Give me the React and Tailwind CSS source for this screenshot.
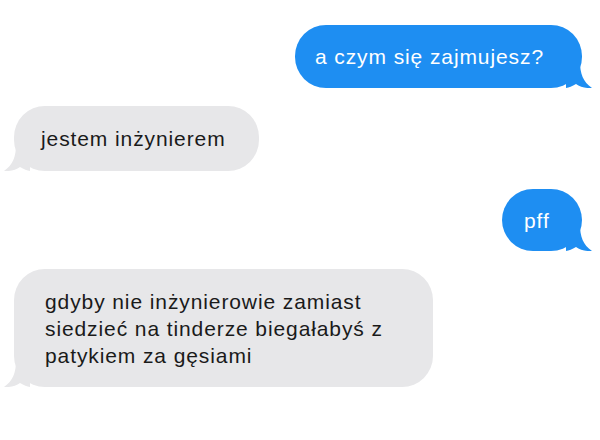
import React from 'react';

const messages = [
  { from: 'me', text: 'a czym się zajmujesz?', box: 'w-[287px] h-[63px] pl-[20px]' },
  { from: 'them', text: 'jestem inżynierem', box: 'w-[245px] h-[65px] pl-[27px]' },
  { from: 'me', text: 'pff', box: 'w-[80px] h-[62px] pl-[22px]' },
  {
    from: 'them',
    text: 'gdyby nie inżynierowie zamiast\nsiedzieć na tinderze biegałabyś z\npatykiem za gęsiami',
    box: 'w-[419px] h-[118px] pl-[31px]',
  },
];

function Tail({ side, color }) {
  // small curled tail at the bottom corner of a bubble
  if (side === 'right') {
    return (
      <svg className="absolute -right-[10px] bottom-0" width="26" height="26" viewBox="0 0 26 26">
        <path d="M0 0 L14 0 C14 11 17 20 26 26 C20 26.5 14 25 10 22 C6 24.5 3 25.5 0 26 Z" fill={color} />
      </svg>
    );
  }
  return (
    <svg className="absolute -left-[10px] bottom-0" width="26" height="26" viewBox="0 0 26 26">
      <path d="M26 0 L12 0 C12 11 9 20 0 26 C6 26.5 12 25 16 22 C20 24.5 23 25.5 26 26 Z" fill={color} />
    </svg>
  );
}

function Bubble({ from, text, box }) {
  const mine = from === 'me';
  const lines = text.split('\n');
  return (
    <div className={mine ? 'flex justify-end pr-[18px]' : 'flex justify-start'}>
      <div
        className={
          (mine
            ? 'relative bg-[#1e8ef2] text-white rounded-[31px] '
            : 'relative bg-[#e7e7e9] text-[#1a1a1a] rounded-[31px] ') +
          'flex flex-col justify-center shrink-0 text-[21px] leading-[27px] tracking-[0.9px] ' +
          box
        }
      >
        {lines.map((l, i) => (
          <div key={i} className="relative whitespace-nowrap">{l}</div>
        ))}
        <Tail side={mine ? 'right' : 'left'} color={mine ? '#1e8ef2' : '#e7e7e9'} />
      </div>
    </div>
  );
}

export default function App() {
  return (
    <div className="w-[600px] h-[440px] bg-white overflow-hidden pt-[25px] pl-[14px] flex flex-col gap-[18px] font-['Liberation_Sans',Arial,sans-serif]">
      {messages.map((m, i) => (
        <Bubble key={i} {...m} />
      ))}
    </div>
  );
}
